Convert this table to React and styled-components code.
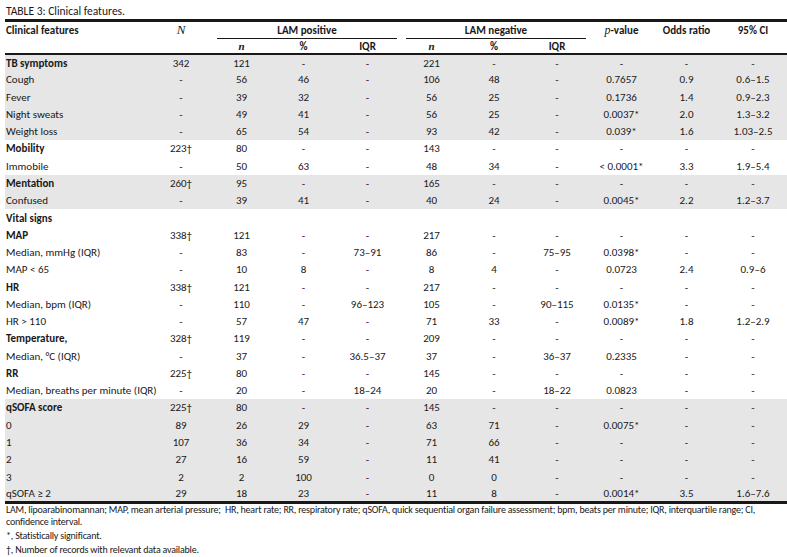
import React from "react";
import styled, { createGlobalStyle } from "styled-components";

const GlobalStyle = createGlobalStyle`
  html, body {
    margin: 0;
    padding: 0;
    background: #fff;
  }
  body {
    font-family: "Carlito", "Lato", "Liberation Sans", sans-serif;
    color: #1a1819;
  }
`;

const Page = styled.div`
  padding: 5px 0 0 5px;
  width: 782px;
`;

const Caption = styled.div`
  font-size: 11.5px;
  line-height: 12px;
  padding-left: 1px;
  margin-bottom: 2px;
`;

const Table = styled.table`
  width: 782px;
  border-collapse: collapse;
  table-layout: fixed;
  border-top: 3px solid #1a1819;
  border-bottom: 3px solid #1a1819;
  font-size: 11px;
  line-height: 13px;
`;

const HeadRow = styled.tr`
  height: ${(p) => p.$h}px;
`;

const HeadCell = styled.th`
  font-weight: bold;
  text-align: ${(p) => (p.$left ? "left" : "center")};
  vertical-align: top;
  padding: ${(p) => (p.$left ? "2px 0 0 1px" : "2px 0 0 0")};
  border-bottom: ${(p) => (p.$rule ? "2px solid #1a1819" : "none")};
`;

const SubHead = styled.th`
  font-weight: bold;
  text-align: center;
  vertical-align: middle;
  padding: 0;
  border-bottom: 2px solid #1a1819;
`;

const GroupLabel = styled.div`
  border-bottom: 1.5px solid #1a1819;
  margin: 0 3px 0 6px;
  padding-bottom: 1px;
`;

const Ital = styled.span`
  font-family: "Liberation Serif", "DejaVu Serif", serif;
  font-style: italic;
  font-weight: ${(p) => (p.$bold ? "bold" : "normal")};
  font-size: ${(p) => p.$size || 12}px;
  line-height: 12px;
`;

const Row = styled.tr`
  height: 17.28px;
  background: ${(p) => (p.$shade ? "#e6e6e6" : "#fff")};
`;

const Cell = styled.td`
  text-align: ${(p) => (p.$left ? "left" : "center")};
  font-weight: ${(p) => (p.$bold ? "bold" : "normal")};
  padding: ${(p) => (p.$left ? "0 0 0 1px" : "0")};
  white-space: nowrap;
  vertical-align: middle;
`;

const Notes = styled.div`
  font-size: 10px;
  letter-spacing: -0.2px;
  line-height: 12px;
  padding: 0 0 0 1px;
`;

const Note = styled.p`
  margin: 0 0 2px 0;
  white-space: nowrap;

  &:last-child {
    margin-bottom: 0;
  }
`;

const widths = [146, 60, 61, 63, 65, 63, 62, 64, 65, 65, 68];

const groups = [
  {
    shade: true,
    rows: [
      ["TB symptoms", true, ["342", "121", "-", "-", "221", "-", "-", "-", "-", "-"]],
      ["Cough", false, ["-", "56", "46", "-", "106", "48", "-", "0.7657", "0.9", "0.6\u20131.5"]],
      ["Fever", false, ["-", "39", "32", "-", "56", "25", "-", "0.1736", "1.4", "0.9\u20132.3"]],
      ["Night sweats", false, ["-", "49", "41", "-", "56", "25", "-", "0.0037*", "2.0", "1.3\u20133.2"]],
      ["Weight loss", false, ["-", "65", "54", "-", "93", "42", "-", "0.039*", "1.6", "1.03\u20132.5"]],
    ],
  },
  {
    shade: false,
    rows: [
      ["Mobility", true, ["223\u2020", "80", "-", "-", "143", "-", "-", "-", "-", "-"]],
      ["Immobile", false, ["-", "50", "63", "-", "48", "34", "-", "< 0.0001*", "3.3", "1.9\u20135.4"]],
    ],
  },
  {
    shade: true,
    rows: [
      ["Mentation", true, ["260\u2020", "95", "-", "-", "165", "-", "-", "-", "-", "-"]],
      ["Confused", false, ["-", "39", "41", "-", "40", "24", "-", "0.0045*", "2.2", "1.2\u20133.7"]],
    ],
  },
  {
    shade: false,
    rows: [
      ["Vital signs", true, ["", "", "", "", "", "", "", "", "", ""]],
      ["MAP", true, ["338\u2020", "121", "-", "-", "217", "-", "-", "-", "-", "-"]],
      ["Median, mmHg (IQR)", false, ["-", "83", "-", "73\u201391", "86", "-", "75\u201395", "0.0398*", "-", "-"]],
      ["MAP < 65", false, ["-", "10", "8", "-", "8", "4", "-", "0.0723", "2.4", "0.9\u20136"]],
      ["HR", true, ["338\u2020", "121", "-", "-", "217", "-", "-", "-", "-", "-"]],
      ["Median, bpm (IQR)", false, ["-", "110", "-", "96\u2013123", "105", "-", "90\u2013115", "0.0135*", "-", "-"]],
      ["HR > 110", false, ["-", "57", "47", "-", "71", "33", "-", "0.0089*", "1.8", "1.2\u20132.9"]],
      ["Temperature,", true, ["328\u2020", "119", "-", "-", "209", "-", "-", "-", "-", "-"]],
      ["Median, \u00b0C (IQR)", false, ["-", "37", "-", "36.5\u201337", "37", "-", "36\u201337", "0.2335", "-", "-"]],
      ["RR", true, ["225\u2020", "80", "-", "-", "145", "-", "-", "-", "-", "-"]],
      ["Median, breaths per minute (IQR)", false, ["-", "20", "-", "18\u201324", "20", "-", "18\u201322", "0.0823", "-", "-"]],
    ],
  },
  {
    shade: true,
    rows: [
      ["qSOFA score", true, ["225\u2020", "80", "-", "-", "145", "-", "-", "-", "-", "-"]],
      ["0", false, ["89", "26", "29", "-", "63", "71", "-", "0.0075*", "-", "-"]],
      ["1", false, ["107", "36", "34", "-", "71", "66", "-", "-", "-", "-"]],
      ["2", false, ["27", "16", "59", "-", "11", "41", "-", "-", "-", "-"]],
      ["3", false, ["2", "2", "100", "-", "0", "0", "-", "-", "-", "-"]],
      ["qSOFA \u2265 2", false, ["29", "18", "23", "-", "11", "8", "-", "0.0014*", "3.5", "1.6\u20137.6"]],
    ],
  },
];

export default function App() {
  return (
    <Page>
      <GlobalStyle />
      <Caption>TABLE 3: Clinical features.</Caption>
      <Table>
        <colgroup>
          {widths.map((w, i) => (
            <col key={i} style={{ width: w }} />
          ))}
        </colgroup>
        <thead>
          <HeadRow $h={16}>
            <HeadCell $left $rule rowSpan={2}>Clinical features</HeadCell>
            <HeadCell $rule rowSpan={2}>
              <Ital $size={13}>N</Ital>
            </HeadCell>
            <HeadCell colSpan={3}>
              <GroupLabel>LAM positive</GroupLabel>
            </HeadCell>
            <HeadCell colSpan={3}>
              <GroupLabel>LAM negative</GroupLabel>
            </HeadCell>
            <HeadCell $rule rowSpan={2}>
              <Ital>p</Ital>-value
            </HeadCell>
            <HeadCell $rule rowSpan={2}>Odds ratio</HeadCell>
            <HeadCell $rule rowSpan={2}>95% CI</HeadCell>
          </HeadRow>
          <HeadRow $h={15}>
            <SubHead><Ital $bold $size={11}>n</Ital></SubHead>
            <SubHead>%</SubHead>
            <SubHead>IQR</SubHead>
            <SubHead><Ital $bold $size={11}>n</Ital></SubHead>
            <SubHead>%</SubHead>
            <SubHead>IQR</SubHead>
          </HeadRow>
        </thead>
        <tbody>
          {groups.map((g) =>
            g.rows.map(([label, bold, vals]) => (
              <Row key={label} $shade={g.shade}>
                <Cell $left $bold={bold}>{label}</Cell>
                {vals.map((v, i) => (
                  <Cell key={i}>{v}</Cell>
                ))}
              </Row>
            ))
          )}
        </tbody>
      </Table>
      <Notes>
        <Note>
          LAM, lipoarabinomannan; MAP, mean arterial pressure;&nbsp; HR, heart rate; RR, respiratory rate; qSOFA, quick sequential organ failure assessment; bpm, beats per minute; IQR, interquartile range; CI,
          <br />
          confidence interval.
        </Note>
        <Note>*, Statistically significant.</Note>
        <Note>{"\u2020"}, Number of records with relevant data available.</Note>
      </Notes>
    </Page>
  );
}
